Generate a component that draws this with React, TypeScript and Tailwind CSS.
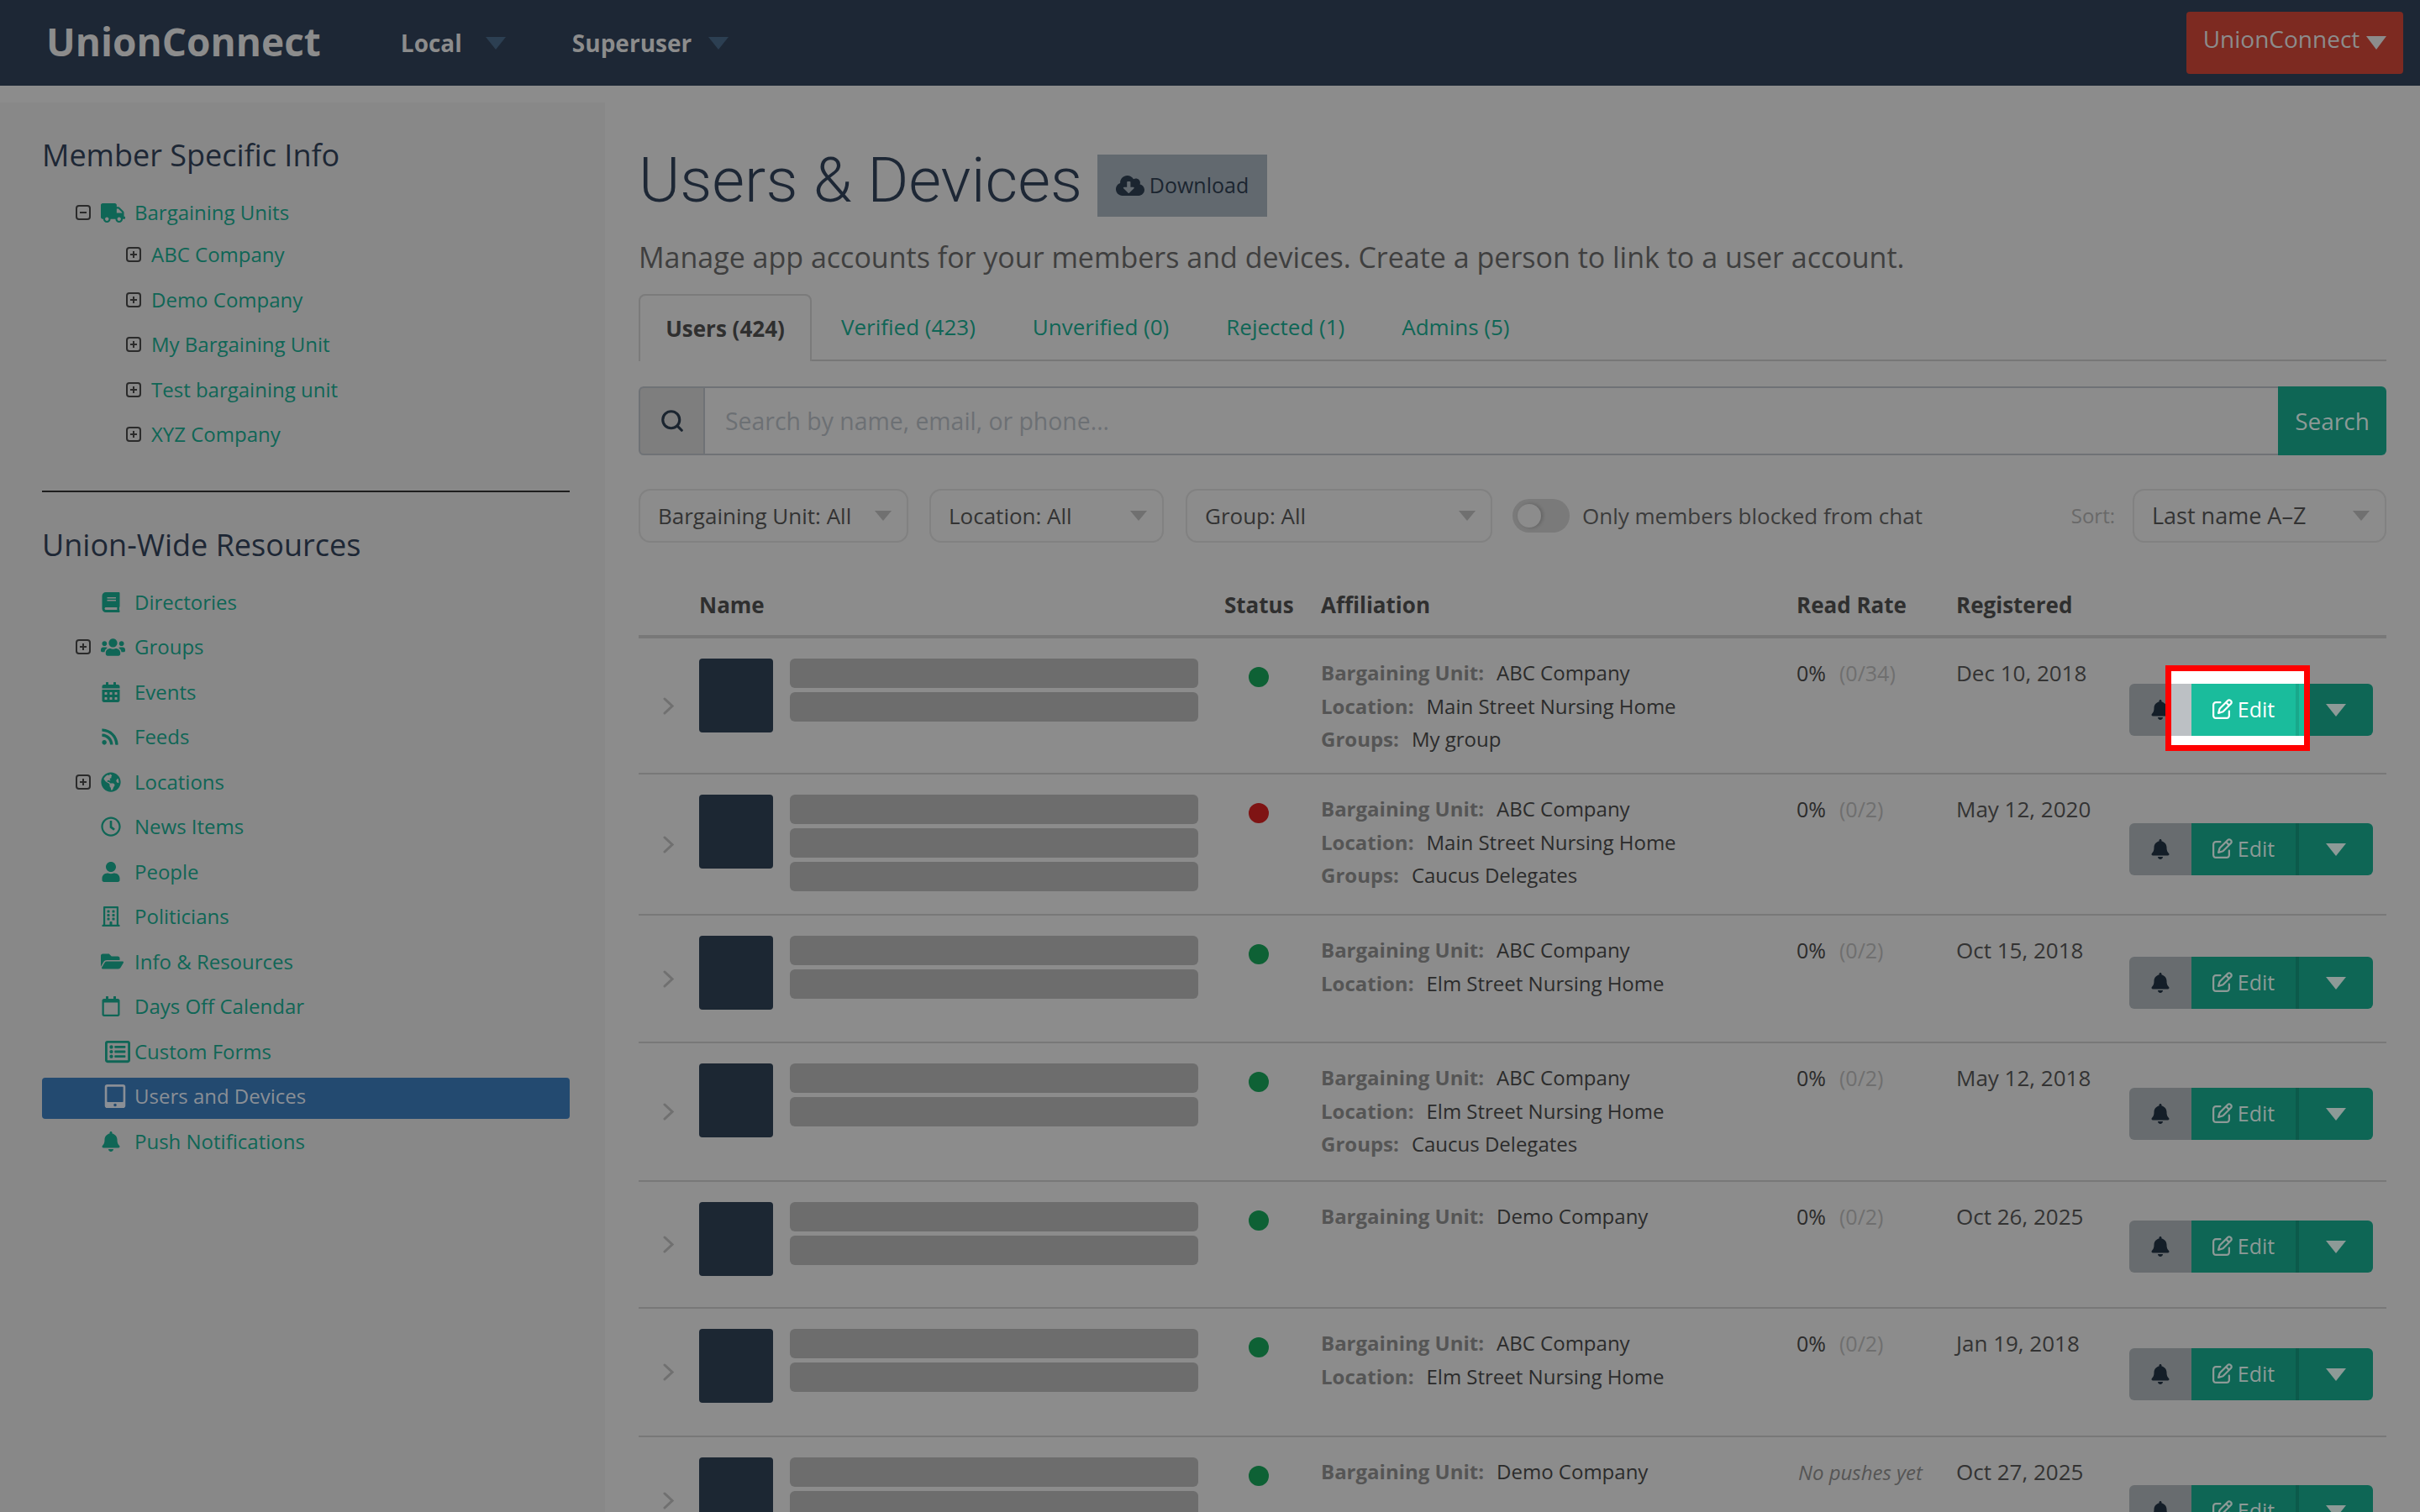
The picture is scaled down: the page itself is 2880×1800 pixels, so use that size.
import type { ReactNode } from "react";
import { Search } from "lucide-react";
import {
  FaBell,
  FaBook,
  FaCalendarAlt,
  FaCloudDownloadAlt,
  FaFolderOpen,
  FaGlobeAmericas,
  FaRegBuilding,
  FaRegCalendar,
  FaRegClock,
  FaRegListAlt,
  FaRss,
  FaTabletAlt,
  FaTruck,
  FaUser,
  FaUsers,
} from "react-icons/fa";
import { FaRegPenToSquare } from "react-icons/fa6";

function Caret({ className }: { className: string }) {
  return (
    <svg viewBox="0 0 24 16" preserveAspectRatio="none" className={className}>
      <polygon points="0,0 24,0 12,16" fill="currentColor" />
    </svg>
  );
}

function TreeBox({ open }: { open?: boolean }) {
  return (
    <svg viewBox="0 0 18 18" className="h-[18px] w-[18px] text-[#2b2b2b]" fill="none" stroke="currentColor">
      <rect x="1" y="1" width="16" height="16" rx="3" strokeWidth="2" />
      <path d="M5 9h8" strokeWidth="2" />
      {open ? null : <path d="M9 5v8" strokeWidth="2" />}
    </svg>
  );
}

const subUnits = ["ABC Company", "Demo Company", "My Bargaining Unit", "Test bargaining unit", "XYZ Company"];

const resources: { label: string; icon: ReactNode; tree?: boolean; active?: boolean }[] = [
  { label: "Directories", icon: <FaBook size={24} /> },
  { label: "Groups", icon: <FaUsers size={29} />, tree: true },
  { label: "Events", icon: <FaCalendarAlt size={24} /> },
  { label: "Feeds", icon: <FaRss size={22} /> },
  { label: "Locations", icon: <FaGlobeAmericas size={24} />, tree: true },
  { label: "News Items", icon: <FaRegClock size={24} /> },
  { label: "People", icon: <FaUser size={24} /> },
  { label: "Politicians", icon: <FaRegBuilding size={24} /> },
  { label: "Info & Resources", icon: <FaFolderOpen size={27} /> },
  { label: "Days Off Calendar", icon: <FaRegCalendar size={24} /> },
  { label: "Custom Forms", icon: <FaRegListAlt size={30} className="ml-[5px]" /> },
  { label: "Users and Devices", icon: <FaTabletAlt size={28} className="ml-[3px] text-[#8a8f96]" />, active: true },
  { label: "Push Notifications", icon: <FaBell size={24} /> },
];

function Sidebar() {
  return (
    <aside className="mt-[20px] w-[720px] shrink-0 bg-[#888888] pl-[50px] pr-[42px] pt-[39px] text-[24px] text-[#0f6656]">
      <h2 className="mb-[21px] flex h-[48px] items-center text-[36px] text-[#1d2735]">Member Specific Info</h2>
      <div className="flex h-[46.5px] items-center pl-[40px]">
        <span className="flex w-[30px] items-center">
          <TreeBox open />
        </span>
        <span className="w-[40px]">
          <FaTruck size={29} />
        </span>
        <span>Bargaining Units</span>
      </div>
      {subUnits.map((unit) => (
        <div key={unit} className="flex h-[53.5px] items-center pl-[100px]">
          <span className="flex w-[30px] items-center">
            <TreeBox />
          </span>
          <span>{unit}</span>
        </div>
      ))}
      <hr className="mt-[40px] border-t-2 border-[#1e1e1e]" />
      <h2 className="mb-[17px] mt-[39px] flex h-[48px] items-center text-[36px] text-[#1d2735]">Union-Wide Resources</h2>
      {resources.map((item) =>
        item.active ? (
          <div
            key={item.label}
            className="mt-[4px] flex h-[49.5px] items-center rounded-[4px] bg-[#234a70] pb-[4px] pl-[40px] text-[#8a8f96]"
          >
            <span className="w-[30px]" />
            <span className="w-[40px]">{item.icon}</span>
            <span>{item.label}</span>
          </div>
        ) : (
          <div key={item.label} className="flex h-[53.5px] items-center pl-[40px]">
            <span className="flex w-[30px] items-center">{item.tree ? <TreeBox /> : null}</span>
            <span className="w-[40px]">{item.icon}</span>
            <span>{item.label}</span>
          </div>
        ),
      )}
    </aside>
  );
}

const tabs = ["Verified (423)", "Unverified (0)", "Rejected (1)", "Admins (5)"];

function FilterSelect({ label, className }: { label: string; className: string }) {
  return (
    <div
      className={`flex h-[64px] items-center justify-between rounded-[14px] border-2 border-[#818181] pl-[21px] pr-[18px] text-[#333333] ${className}`}
    >
      <span>{label}</span>
      <Caret className="h-[12px] w-[20px] text-[#707070]" />
    </div>
  );
}

type Row = {
  height: string;
  btn: string;
  bars: number;
  status: string;
  unit: string;
  location?: string;
  groups?: string;
  pushes: string;
  date: string;
  focus?: boolean;
};

const rows: Row[] = [
  { height: "h-[162px]", btn: "mt-[54px]", bars: 2, status: "bg-[#0e6135]", unit: "ABC Company", location: "Main Street Nursing Home", groups: "My group", pushes: "(0/34)", date: "Dec 10, 2018", focus: true },
  { height: "h-[168px]", btn: "mt-[58px]", bars: 3, status: "bg-[#7f1414]", unit: "ABC Company", location: "Main Street Nursing Home", groups: "Caucus Delegates", pushes: "(0/2)", date: "May 12, 2020" },
  { height: "h-[152px]", btn: "mt-[49px]", bars: 2, status: "bg-[#0e6135]", unit: "ABC Company", location: "Elm Street Nursing Home", pushes: "(0/2)", date: "Oct 15, 2018" },
  { height: "h-[165px]", btn: "mt-[53px]", bars: 2, status: "bg-[#0e6135]", unit: "ABC Company", location: "Elm Street Nursing Home", groups: "Caucus Delegates", pushes: "(0/2)", date: "May 12, 2018" },
  { height: "h-[151px]", btn: "mt-[46px]", bars: 2, status: "bg-[#0e6135]", unit: "Demo Company", pushes: "(0/2)", date: "Oct 26, 2025" },
  { height: "h-[153px]", btn: "mt-[47px]", bars: 2, status: "bg-[#0e6135]", unit: "ABC Company", location: "Elm Street Nursing Home", pushes: "(0/2)", date: "Jan 19, 2018" },
  { height: "h-[153px]", btn: "mt-[57px]", bars: 2, status: "bg-[#0e6135]", unit: "Demo Company", pushes: "", date: "Oct 27, 2025" },
];

const gridCols = "grid-cols-[72px_625px_82px_599px_190px_206px_306px]";

function Affiliation({ label, value }: { label: string; value: string }) {
  return (
    <div className="flex gap-[15px] text-[24px] leading-[39.5px]">
      <span className="font-bold text-[#555555]">{label}:</span>
      <span className="text-[#2b2b2b]">{value}</span>
    </div>
  );
}

function Actions({ focus }: { focus?: boolean }) {
  return (
    <div className="relative flex h-[62px] w-[290px] overflow-visible rounded-[6px] text-[25px] leading-[30px]">
      <div className="flex w-[74px] items-center justify-center rounded-l-[6px] bg-[#686c6f] text-[#141e28]">
        <FaBell size={24} />
      </div>
      <div className="flex w-[124px] items-center justify-center gap-[6px] bg-[#0e6655] pb-[3px] text-[#8d9a97]">
        <FaRegPenToSquare size={24} />
        <span>Edit</span>
      </div>
      <div className="w-[4px] bg-[#0c5a4b]" />
      <div className="flex flex-1 items-center justify-center rounded-r-[6px] bg-[#0e6655] text-[#8d9a97]">
        <Caret className="h-[15px] w-[24px]" />
      </div>
      {focus ? (
        <div className="absolute left-[43px] top-[-22px] h-[102px] w-[172px] overflow-hidden border-[7px] border-[#ff0000] bg-white pt-[15px]">
          <div className="flex h-[62px]">
            <div className="w-[24px] bg-[#bcc0c4]" />
            <div className="flex w-[124px] items-center justify-center gap-[6px] bg-[#1abc9c] pb-[3px] text-white">
              <FaRegPenToSquare size={24} />
              <span>Edit</span>
            </div>
            <div className="w-[4px] bg-[#18a88b]" />
            <div className="flex-1 bg-[#1abc9c]" />
          </div>
        </div>
      ) : null}
    </div>
  );
}

function UserRow({ row }: { row: Row }) {
  return (
    <div className={`grid ${gridCols} ${row.height} overflow-visible border-b-2 border-[#787878]`}>
      <div className="flex items-center pl-[29px]">
        <svg viewBox="0 0 13 21" className="h-[21px] w-[13px]" fill="none" stroke="#707070" strokeWidth="3" strokeLinecap="round">
          <path d="M2 2l9 8.5L2 19" />
        </svg>
      </div>
      <div className="flex gap-[20px] pt-[24px]">
        <div className="h-[88px] w-[88px] shrink-0 rounded-[4px] bg-[#1c2733]" />
        <div className="flex w-[486px] flex-col gap-[5px]">
          {Array.from({ length: row.bars }).map((_, i) => (
            <div key={i} className="h-[35px] rounded-[6px] bg-[#6d6d6d]" />
          ))}
        </div>
      </div>
      <div className="flex justify-center pt-[34px]">
        <div className={`h-[24px] w-[24px] rounded-full ${row.status}`} />
      </div>
      <div className="pl-[33px] pt-[21px]">
        <Affiliation label="Bargaining Unit" value={row.unit} />
        {row.location ? <Affiliation label="Location" value={row.location} /> : null}
        {row.groups ? <Affiliation label="Groups" value={row.groups} /> : null}
      </div>
      <div className="pt-[22px] leading-[39px] text-[#2b2b2b]">
        {row.pushes ? (
          <span className="flex gap-[16px]">
            <span>0%</span>
            <span className="text-[#6f6f6f]">{row.pushes}</span>
          </span>
        ) : (
          <span className="pl-[2px] text-[24px] italic text-[#555555]">No pushes yet</span>
        )}
      </div>
      <div className="pt-[22px] text-[26px] leading-[39px] text-[#333333]">{row.date}</div>
      <div className={row.btn}>
        <Actions focus={row.focus} />
      </div>
    </div>
  );
}

function Main() {
  return (
    <main className="min-w-0 flex-1 pl-[40px] pr-[40px] pt-[82px]">
      <div className="flex h-[74px] items-start gap-[18px]">
        <h1 className="font-['Roboto',sans-serif] text-[75px] font-light leading-[60px] text-[#1d2735]">Users &amp; Devices</h1>
        <button className="flex h-[74px] w-[202px] items-center justify-center gap-[6px] bg-[#62696f] text-[25px] text-[#1b2530]">
          <FaCloudDownloadAlt size={34} />
          <span>Download</span>
        </button>
      </div>

      <p className="mt-[25px] text-[34px] leading-[46px] text-[#3f3f3f]">
        Manage app accounts for your members and devices. Create a person to link to a user account.
      </p>

      <div className="mt-[21px] flex h-[80px] border-b-2 border-[#777777] text-[26px]">
        <div className="-mb-[2px] flex h-[80px] w-[206px] items-center justify-center rounded-t-[8px] border-2 border-b-0 border-[#7b7b7b] bg-[#8c8c8c] font-bold text-[#2f2f2f]">
          Users (424)
        </div>
        <div className="ml-[35px] flex items-center gap-[68px] text-[#0f6656]">
          {tabs.map((tab) => (
            <span key={tab}>{tab}</span>
          ))}
        </div>
      </div>

      <div className="mt-[30px] flex h-[82px] text-[28.4px]">
        <div className="flex w-[79px] items-center justify-center rounded-l-[6px] border-2 border-[#6f7276] bg-[#7e7e7e] text-[#1b2530]">
          <Search size={30} strokeWidth={2.5} />
        </div>
        <div className="flex flex-1 items-center border-y-2 border-[#6f7276] pl-[24px] text-[#6c7074]">Search by name, email, or phone...</div>
        <button className="w-[129px] rounded-r-[6px] bg-[#0e6655] text-[28px] text-[#8d9a97]">Search</button>
      </div>

      <div className="mt-[40px] flex items-center text-[26px]">
        <FilterSelect label="Bargaining Unit: All" className="w-[321px]" />
        <FilterSelect label="Location: All" className="ml-[25px] w-[279px]" />
        <FilterSelect label="Group: All" className="ml-[26px] w-[365px]" />
        <div className="relative ml-[24px] h-[40px] w-[68px] rounded-full bg-[#7a7a7a]">
          <div className="absolute left-[6px] top-[6px] h-[28px] w-[28px] rounded-full bg-[#8c8c8c] shadow-[2px_0_4px_rgba(0,0,0,0.2)]" />
        </div>
        <span className="ml-[15px] text-[#3b3b3b]">Only members blocked from chat</span>
        <span className="ml-auto text-[24px] text-[#696969]">Sort:</span>
        <FilterSelect label="Last name A–Z" className="ml-[21px] w-[302px] text-[27px]" />
      </div>

      <div className={`grid ${gridCols} h-[114px] items-end border-b-4 border-[#787878] pb-[18px] text-[26px] font-bold leading-[36px] text-[#2f2f2f]`}>
        <span />
        <span>Name</span>
        <span>Status</span>
        <span className="pl-[33px]">Affiliation</span>
        <span>Read Rate</span>
        <span>Registered</span>
        <span />
      </div>

      <div className="text-[25px]">
        {rows.map((row) => (
          <UserRow key={row.date} row={row} />
        ))}
      </div>
    </main>
  );
}

export default function App() {
  return (
    <div className="flex h-screen flex-col overflow-hidden bg-[#8c8c8c] font-['Open_Sans',sans-serif]">
      <header className="flex h-[102px] shrink-0 items-center bg-[#1d2735] text-[#8c8c8c]">
        <span className="mb-[3px] ml-[55px] text-[46px] font-bold">UnionConnect</span>
        <span className="ml-[95px] text-[28px] font-bold">Local</span>
        <Caret className="ml-[28px] h-[15px] w-[24px] text-[#2c3f52]" />
        <span className="ml-[79px] text-[28px] font-bold">Superuser</span>
        <Caret className="ml-[20px] h-[15px] w-[24px] text-[#2c3f52]" />
        <button className="ml-auto mr-[20px] flex h-[74px] w-[258px] items-center justify-center gap-[8px] rounded-[4px] bg-[#7d2a21] text-[28px]">
          <span className="mb-[10px]">UnionConnect</span>
          <Caret className="h-[16px] w-[24px]" />
        </button>
      </header>
      <div className="flex min-h-0 flex-1">
        <Sidebar />
        <Main />
      </div>
    </div>
  );
}
